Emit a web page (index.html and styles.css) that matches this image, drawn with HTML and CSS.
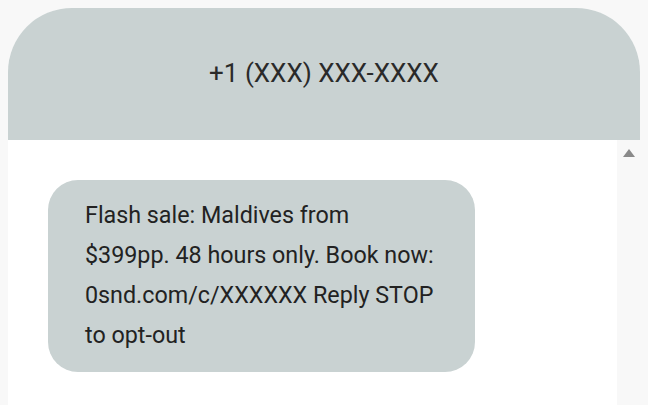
FILE: index.html
```html
<!DOCTYPE html>
<html lang="en">
<head>
    <meta charset="UTF-8">
    <meta name="viewport" content="width=device-width, initial-scale=1.0">
    <title>SMS preview</title>
    <link rel="stylesheet" href="styles.css">
</head>
<body>
    <div class="phone">
        <div class="phone-header">
            <div class="sender">+1 (XXX) XXX-XXXX</div>
        </div>
        <div class="phone-body">
            <div class="messages">
                <div class="bubble">
                    Flash sale: Maldives from $399pp. 48 hours only. Book now: 0snd.com/c/XXXXXX Reply STOP to opt-out
                </div>
            </div>
            <!-- scrollbar track -->
            <div class="scroll-track">
                <div class="scroll-arrow"></div>
            </div>
        </div>
    </div>
</body>
</html>
```

FILE: styles.css
```css
* {
    margin: 0;
    padding: 0;
    box-sizing: border-box;
}

body {
    background-color: #f8f8f8;
    font-family: Roboto, Arial, sans-serif;
    padding: 8px;
    height: 405px;
    overflow: hidden;
}

.phone {
    width: 632px;
    background-color: #fff;
    border-radius: 64px 64px 0 0;
    overflow: hidden;
}

.phone-header {
    height: 132px;
    background-color: #c9d2d2;
    display: flex;
    justify-content: center;
    padding-top: 52px;
}

.sender {
    font-size: 26px;
    color: #2a2a2a;
    line-height: 26px;
}

.phone-body {
    display: flex;
    height: 265px;
}

.messages {
    flex: 1;
    padding: 40px 0 0 40px;
}

.bubble {
    width: 427px;
    background-color: #c9d2d2;
    border-radius: 30px;
    padding: 15px 37px 17px 37px;
    font-size: 23.3px;
    line-height: 40px;
    color: #222;
}

.scroll-track {
    width: 23px;
    background-color: #f8f8f8;
    display: flex;
    justify-content: center;
    padding-top: 9px;
}

.scroll-arrow {
    width: 0;
    height: 0;
    border-left: 6px solid transparent;
    border-right: 6px solid transparent;
    border-bottom: 8px solid #8a8a8a;
}
```
